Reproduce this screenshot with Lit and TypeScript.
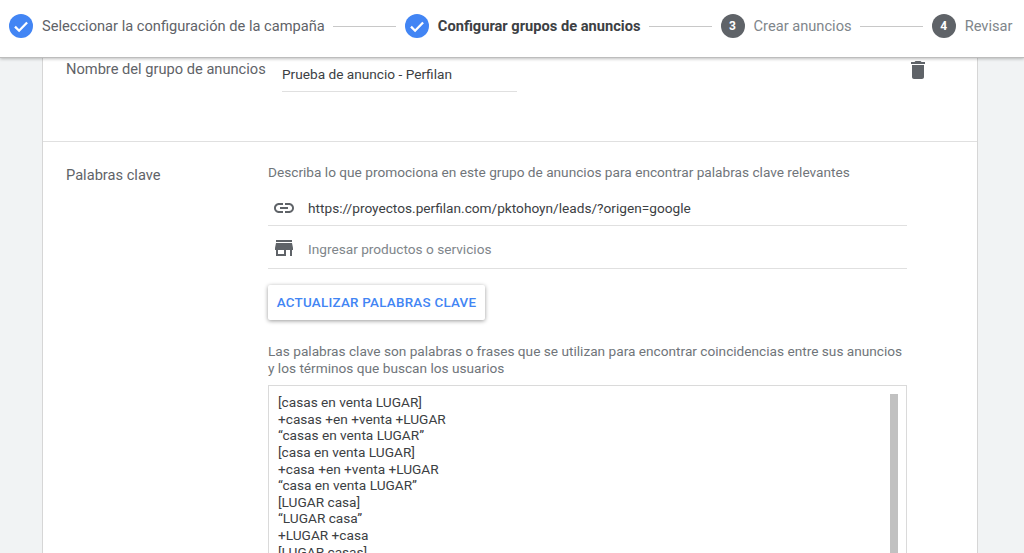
import { LitElement, html, css, svg } from "lit";
import { customElement } from "lit/decorators.js";

const keywords = [
  "[casas en venta LUGAR]",
  "+casas +en +venta +LUGAR",
  "“casas en venta LUGAR”",
  "[casa en venta LUGAR]",
  "+casa +en +venta +LUGAR",
  "“casa en venta LUGAR”",
  "[LUGAR casa]",
  "“LUGAR casa”",
  "+LUGAR +casa",
  "[LUGAR casas]",
];

const check = svg`<svg class="badge" viewBox="0 0 24 24" width="24" height="24"><circle cx="12" cy="12" r="12" fill="#4285f4"/><path d="M6 12.600l4.100 4.100 8-8.200" fill="none" stroke="#fff" stroke-width="2.300"/></svg>`;

@customElement("app-root")
export class AppRoot extends LitElement {
  static styles = css`
    :host {
      display: block;
      height: 553px;
      overflow: hidden;
      background: #f1f3f4;
      font-family: Roboto, "Liberation Sans", sans-serif;
      font-size: 14.65px;
      color: #5f6368;
    }
    .stepper {
      position: relative;
      z-index: 1;
      box-sizing: border-box;
      height: 58px;
      display: flex;
      align-items: center;
      padding: 0 0 5px 9px;
      background: #fff;
      border-bottom: 1px solid #bdbdbd;
      box-shadow: 0 1px 3px rgba(0, 0, 0, 0.25);
    }
    .step { display: flex; align-items: center; gap: 9px; white-space: nowrap; }
    .badge { flex: none; display: block; }
    .num {
      width: 24px;
      height: 24px;
      border-radius: 50%;
      background: #5f6368;
      color: #fff;
      font-size: 12px;
      font-weight: 700;
      display: flex;
      align-items: center;
      justify-content: center;
    }
    .done { color: #5f6368; }
    .active { color: #3c4043; font-weight: 700; }
    .todo { color: #80868b; }
    .line { width: 63px; height: 1px; background: #c8c8c8; margin: 0 9px 0 8.1px; flex: none; }
    .card {
      box-sizing: border-box;
      width: 936px;
      margin-left: 42px;
      height: 495px;
      background: #fff;
      border-left: 1px solid #d6d6d6;
      border-right: 1px solid #d6d6d6;
      overflow: hidden;
    }
    .name-row {
      box-sizing: border-box;
      height: 84px;
      border-bottom: 1px solid #e0e0e0;
      display: grid;
      grid-template-columns: 216px 235px 1fr auto;
      padding: 0 47px 0 23px;
    }
    .name-label { padding-top: 2px; line-height: 18px; color: #5f6368; }
    .name-input {
      height: 34px;
      box-sizing: border-box;
      border-bottom: 1px solid #e0e0e0;
      padding-top: 7px;
      line-height: 18px;
      font-size: 13.66px;
      color: #3c4043;
    }
    .trash { grid-column: 4; }
    .trash svg { display: block; }
    .kw {
      display: grid;
      grid-template-columns: 202px 639px;
      padding: 23px 0 0 23px;
    }
    .kw-label { line-height: 20px; margin-top: -0.4px; }
    .hint { line-height: 16.5px; font-size: 13.66px; color: #70757a; }
    .hint.top { margin-top: -1px; height: 18.5px; }
    .hint.bottom { padding-top: 0.5px; height: 33px; }
    .field {
      display: flex;
      align-items: center;
      gap: 12px;
      border-bottom: 1px solid #e0e0e0;
      box-sizing: border-box;
      padding-left: 4px;
      font-size: 13.66px;
    }
    .field svg { flex: none; }
    .url { height: 43px; padding-top: 8px; color: #3c4043; }
    .prod { height: 43px; padding-top: 4px; color: #80868b; }
    .prod svg { margin-top: -2px; }
    .btn {
      box-sizing: border-box;
      display: block;
      margin: 16px 0 23px;
      height: 35px;
      width: 217px;
      border-radius: 2px;
      line-height: 35px;
      text-align: center;
      font-size: 13.4px;
      font-weight: 500;
      letter-spacing: 0.25px;
      color: #4285f4;
      background: #fff;
      box-shadow: 0 1px 4px rgba(0, 0, 0, 0.4);
      white-space: nowrap;
    }
    .box {
      margin-top: 9px;
      height: 300px;
      box-sizing: border-box;
      border: 1px solid #dadada;
      padding: 8.2px 8px 0 9px;
      display: flex;
      justify-content: space-between;
      font-size: 13.66px;
      line-height: 16.6px;
      color: #3c4043;
    }
    .scroll { width: 8px; background: #c1c1c1; height: 300px; }
  `;

  render() {
    return html`
      <div class="stepper">
        <div class="step done">${check}<span>Seleccionar la configuración de la campaña</span></div>
        <div class="line"></div>
        <div class="step active">${check}<span>Configurar grupos de anuncios</span></div>
        <div class="line"></div>
        <div class="step todo"><div class="num">3</div><span>Crear anuncios</span></div>
        <div class="line"></div>
        <div class="step todo"><div class="num">4</div><span>Revisar</span></div>
      </div>
      <div class="card">
        <div class="name-row">
          <div class="name-label">Nombre del grupo de anuncios</div>
          <div class="name-input">Prueba de anuncio - Perfilan</div>
          <div class="trash">
            <svg viewBox="0 0 24 24" width="24" height="24" fill="#5f6368"><path d="M6 19c0 1.100.9 2 2 2h8c1.100 0 2-.9 2-2V7H6v12zM19 4h-3.500l-1-1h-5l-1 1H5v2h14V4z"/></svg>
          </div>
        </div>
        <div class="kw">
          <div class="kw-label">Palabras clave</div>
          <div>
            <div class="hint top">Describa lo que promociona en este grupo de anuncios para encontrar palabras clave relevantes</div>
            <div class="field url">
              <svg viewBox="0 0 24 24" width="24" height="24" fill="#5f6368"><path d="M3.900 12c0-1.710 1.390-3.100 3.100-3.100h4V7H7c-2.760 0-5 2.240-5 5s2.240 5 5 5h4v-1.900H7c-1.710 0-3.100-1.390-3.100-3.100zM8 13h8v-2H8v2zm9-6h-4v1.900h4c1.710 0 3.100 1.390 3.100 3.100s-1.390 3.100-3.100 3.100h-4V17h4c2.760 0 5-2.240 5-5s-2.240-5-5-5z"/></svg>
              <span>https://proyectos.perfilan.com/pktohoyn/leads/?origen=google</span>
            </div>
            <div class="field prod">
              <svg viewBox="0 0 24 24" width="24" height="24" fill="#5f6368"><path d="M20 4H4v2h16V4zm1 10v-2l-1-5H4l-1 5v2h1v6h10v-6h4v6h2v-6h1zm-9 4H6v-4h6v4z"/></svg>
              <span>Ingresar productos o servicios</span>
            </div>
            <div class="btn">ACTUALIZAR PALABRAS CLAVE</div>
            <div class="hint bottom">Las palabras clave son palabras o frases que se utilizan para encontrar coincidencias entre sus anuncios<br />y los términos que buscan los usuarios</div>
            <div class="box">
              <div>${keywords.map((k) => html`<div>${k}</div>`)}</div>
              <div class="scroll"></div>
            </div>
          </div>
        </div>
      </div>
    `;
  }
}
